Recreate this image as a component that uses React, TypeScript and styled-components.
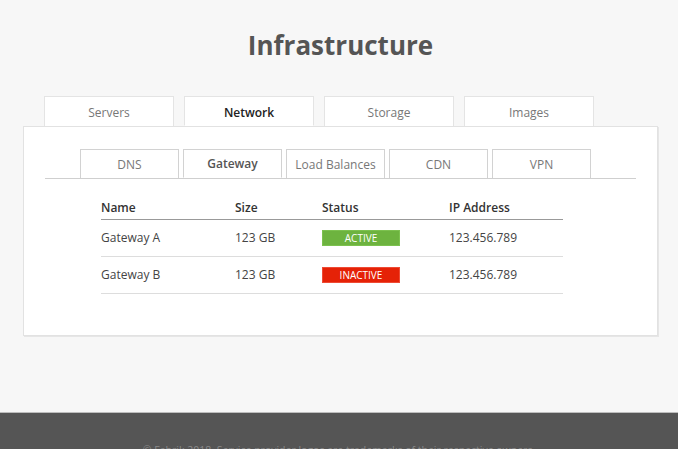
import React from 'react';
import styled, { createGlobalStyle } from 'styled-components';

const GlobalStyle = createGlobalStyle`
  html, body {
    margin: 0;
    padding: 0;
    background: #f7f7f7;
    font-family: "Open Sans", "Liberation Sans", sans-serif;
    color: #444;
  }
  * { box-sizing: border-box; }
`;

const Page = styled.div`
  min-height: 100vh;
  display: flex;
  flex-direction: column;
`;

const Main = styled.main`
  height: 412px;
  padding: 0 20px 0 23px;
`;

const Title = styled.h1`
  margin: 0;
  height: 96px;
  padding-top: 27px;
  font-size: 26px;
  line-height: 36px;
  font-weight: 700;
  color: #555;
  text-align: center;
`;

const TopTabs = styled.nav`
  display: flex;
  gap: 10px;
  padding-left: 21px;
`;

const TopTab = styled.div<{ $active?: boolean }>`
  width: 130px;
  height: 30px;
  display: flex;
  align-items: center;
  justify-content: center;
  padding-top: 2px;
  background: #fff;
  border: 1px solid #e4e4e4;
  border-bottom: ${p => (p.$active ? '1px solid #fff' : 'none')};
  margin-bottom: ${p => (p.$active ? '-1px' : '0')};
  position: relative;
  z-index: ${p => (p.$active ? 1 : 0)};
  font-size: 12px;
  font-weight: ${p => (p.$active ? 600 : 400)};
  color: ${p => (p.$active ? '#222' : '#777')};
`;

const Panel = styled.section`
  background: #fff;
  border: 1px solid #e2e2e2;
  box-shadow: 1px 1px 0 #e6e6e6;
  height: 210px;
  padding: 22px 21px 0 21px;
`;

const SubTabs = styled.div`
  display: flex;
  gap: 4px;
  padding-left: 35px;
  border-bottom: 1px solid #cfcfcf;
`;

const SubTab = styled.div<{ $active?: boolean }>`
  width: 99px;
  height: 29px;
  display: flex;
  align-items: center;
  justify-content: center;
  border: 1px solid #d2d2d2;
  border-bottom: ${p => (p.$active ? '1px solid #fff' : 'none')};
  margin-bottom: ${p => (p.$active ? '-1px' : '0')};
  background: #fff;
  font-size: 12px;
  font-weight: ${p => (p.$active ? 600 : 400)};
  color: ${p => (p.$active ? '#555' : '#777')};
`;

const Table = styled.table`
  margin: 18px 0 0 56px;
  width: 462px;
  border-collapse: collapse;
  font-size: 12px;
  color: #444;
`;

const Th = styled.th<{ $w: number }>`
  width: ${p => p.$w}px;
  text-align: left;
  font-weight: 600;
  color: #333;
  height: 22px;
  padding: 0;
  vertical-align: middle;
  border-bottom: 1px solid #999;
`;

const Td = styled.td`
  height: 37px;
  padding: 0;
  vertical-align: middle;
  border-bottom: 1px solid #ddd;
`;

const Badge = styled.span<{ $active: boolean }>`
  display: inline-flex;
  align-items: center;
  justify-content: center;
  width: 78px;
  height: 16px;
  font-size: 10px;
  color: #fff;
  text-transform: uppercase;
  background: ${p => (p.$active ? '#6db33f' : '#e52207')};
  box-shadow: inset 0 0 0 1px ${p => (p.$active ? '#7cc14f' : '#ee4a34')};
`;

const Footer = styled.footer`
  flex: 1;
  background: #555;
  border-top: 1px solid #bdbdbd;
  padding-top: 30px;
  text-align: center;
  font-size: 10.5px;
  color: #8a8a8a;
`;

const topTabs = ['Servers', 'Network', 'Storage', 'Images'];
const subTabs = ['DNS', 'Gateway', 'Load Balances', 'CDN', 'VPN'];
const rows = [
  { name: 'Gateway A', size: '123 GB', active: true, ip: '123.456.789' },
  { name: 'Gateway B', size: '123 GB', active: false, ip: '123.456.789' },
];

export default function App() {
  return (
    <Page>
      <GlobalStyle />
      <Main>
        <Title>Infrastructure</Title>
        <TopTabs>
          {topTabs.map(t => (
            <TopTab key={t} $active={t === 'Network'}>{t}</TopTab>
          ))}
        </TopTabs>
        <Panel>
          <SubTabs>
            {subTabs.map(t => (
              <SubTab key={t} $active={t === 'Gateway'}>{t}</SubTab>
            ))}
          </SubTabs>
          <Table>
            <thead>
              <tr>
                <Th $w={134}>Name</Th>
                <Th $w={87}>Size</Th>
                <Th $w={127}>Status</Th>
                <Th $w={114}>IP Address</Th>
              </tr>
            </thead>
            <tbody>
              {rows.map(r => (
                <tr key={r.name}>
                  <Td>{r.name}</Td>
                  <Td>{r.size}</Td>
                  <Td>
                    <Badge $active={r.active}>{r.active ? 'Active' : 'Inactive'}</Badge>
                  </Td>
                  <Td>{r.ip}</Td>
                </tr>
              ))}
            </tbody>
          </Table>
        </Panel>
      </Main>
      <Footer>© Fabrik 2018. Service provider logos are trademarks of their respective owners.</Footer>
    </Page>
  );
}
